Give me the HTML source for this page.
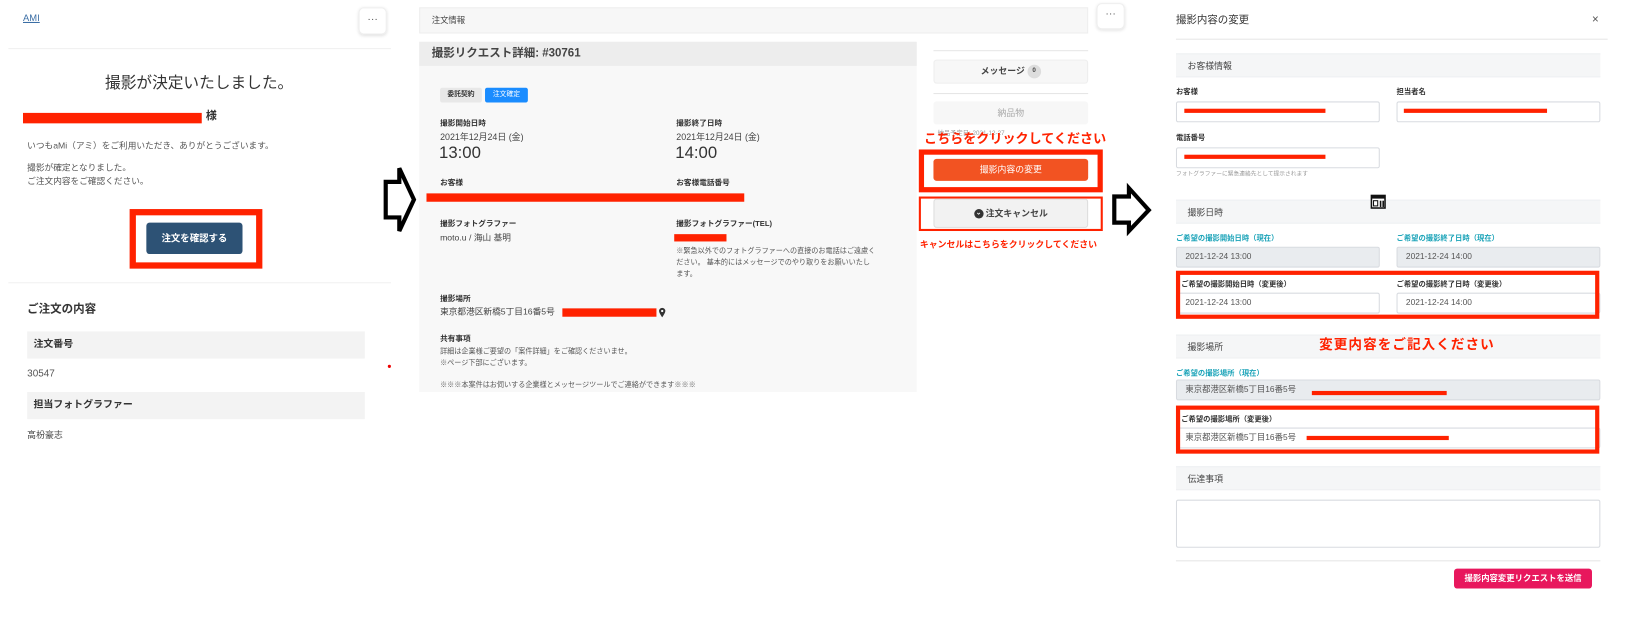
<!DOCTYPE html>
<html><head><meta charset="utf-8"><style>
*{margin:0;padding:0;box-sizing:border-box}
html,body{width:1639px;height:642px;overflow:hidden;background:#fff}
body{font-family:"Liberation Sans","Noto Sans CJK JP",sans-serif;color:#333}
#w{position:absolute;left:0;top:0;width:1568px;height:614px;transform:scale(1.0453);transform-origin:0 0}
.a{position:absolute;white-space:nowrap}
.t{position:absolute;white-space:nowrap;line-height:1}
.rb{position:absolute;background:#ff2200}
.bx{position:absolute;border:5px solid #ff2200}
.hr{position:absolute;height:1px;background:#e6e6e6}
.btn{position:absolute;border-radius:3px;text-align:center}
.sec{position:absolute;left:1125px;width:406px;height:23px;background:#f5f6f7;border-top:1px solid #eef0f2;border-bottom:1px solid #eef0f2;font-size:8.5px;line-height:22px;padding-left:11px;color:#444}
.in{position:absolute;height:20px;border:1px solid #d8dbe0;border-radius:2px;background:#fff;font-size:8px;line-height:18px;padding-left:8px;color:#555}
.dis{background:#e9ecef}
.lb{position:absolute;font-size:7px;font-weight:bold;line-height:1;white-space:nowrap;color:#333}
.teal{color:#1aa3b8}
</style></head><body><div id="w">

<!-- LEFT -->
<div class="t" style="left:22px;top:13px;font-size:9px;color:#3b6ea5;text-decoration:underline">AMI</div>
<div class="btn" style="left:343px;top:7px;width:27px;height:26px;border:1px solid #eee;box-shadow:0 1px 3px rgba(0,0,0,.12);font-size:10px;line-height:22px;color:#555;border-radius:5px">···</div>
<div class="hr" style="left:8px;top:46px;width:366px;background:#f0f0f0"></div>
<div class="t" style="left:0;width:381px;text-align:center;top:72px;font-size:15px;color:#333">撮影が決定いたしました。</div>
<div class="rb" style="left:22px;top:108px;width:171px;height:10px"></div>
<div class="t" style="left:197px;top:106px;font-size:10.5px;font-weight:bold">様</div>
<div class="t" style="left:26px;top:135px;font-size:8.3px;color:#555">いつもaMi（アミ）をご利用いただき、ありがとうございます。</div>
<div class="t" style="left:26px;top:156px;font-size:8.3px;color:#555">撮影が確定となりました。</div>
<div class="t" style="left:26px;top:169px;font-size:8.3px;color:#555">ご注文内容をご確認ください。</div>
<div class="bx" style="left:124px;top:200px;width:127px;height:57px;border-width:6px"></div>
<div class="btn" style="left:140px;top:213px;width:92px;height:30px;background:#2d5275;color:#fff;font-size:9px;font-weight:bold;line-height:30px">注文を確認する</div>
<div class="hr" style="left:8px;top:270px;width:366px;background:#f0f0f0"></div>
<div class="t" style="left:26px;top:291px;font-size:11px;font-weight:bold">ご注文の内容</div>
<div class="a" style="left:26px;top:317px;width:323px;height:26px;background:#f3f3f3;font-size:9.5px;font-weight:bold;line-height:26px;padding-left:6px">注文番号</div>
<div class="t" style="left:26px;top:353px;font-size:9.5px;color:#555">30547</div>
<div class="a" style="left:26px;top:375px;width:323px;height:26px;background:#f3f3f3;font-size:9.5px;font-weight:bold;line-height:26px;padding-left:6px">担当フォトグラファー</div>
<div class="t" style="left:26px;top:412px;font-size:8.5px;color:#444">高枌豪志</div>
<div class="a" style="left:371px;top:349px;width:3px;height:3px;border-radius:50%;background:#e00"></div>

<!-- ARROWS -->
<svg class="a" style="left:0;top:0" width="1568" height="614">
<polygon points="369,174 382,174 382,161 396,191 382,221 382,208 369,208" fill="#fff" stroke="#000" stroke-width="4" stroke-linejoin="miter"/>
<polygon points="1066,188 1080,188 1080,180 1099,201 1080,221 1080,213 1066,213" fill="#fff" stroke="#000" stroke-width="4"/>
</svg>

<!-- MIDDLE -->
<div class="a" style="left:401px;top:7px;width:640px;height:25px;background:#f7f7f7;border:1px solid #eee;font-size:8px;line-height:23px;padding-left:11px;color:#444">注文情報</div>
<div class="btn" style="left:1049px;top:3px;width:27px;height:25px;border:1px solid #eee;box-shadow:0 1px 3px rgba(0,0,0,.12);font-size:10px;line-height:20px;color:#555;border-radius:5px">···</div>
<div class="a" style="left:401px;top:40px;width:476px;height:335px;background:#f8f8f8"></div>
<div class="a" style="left:401px;top:40px;width:476px;height:23px;background:#ededed;font-size:11px;font-weight:bold;line-height:23px;padding-left:12px;color:#444">撮影リクエスト詳細: #30761</div>
<div class="a" style="left:421px;top:84px;width:40px;height:14px;background:#e8e8e8;border-radius:2px;font-size:6.5px;line-height:14px;text-align:center;font-weight:bold">委託契約</div>
<div class="a" style="left:464px;top:84px;width:41px;height:14px;background:#1a8cff;border-radius:2px;font-size:6.5px;line-height:14px;text-align:center;color:#fff">注文確定</div>
<div class="t" style="left:421px;top:114px;font-size:7.3px;font-weight:bold">撮影開始日時</div>
<div class="t" style="left:421px;top:127px;font-size:8.5px;color:#444">2021年12月24日 (金)</div>
<div class="t" style="left:420px;top:139px;font-size:16px;color:#333">13:00</div>
<div class="t" style="left:647px;top:114px;font-size:7.3px;font-weight:bold">撮影終了日時</div>
<div class="t" style="left:647px;top:127px;font-size:8.5px;color:#444">2021年12月24日 (金)</div>
<div class="t" style="left:646px;top:139px;font-size:16px;color:#333">14:00</div>
<div class="t" style="left:421px;top:171px;font-size:7.3px;font-weight:bold">お客様</div>
<div class="t" style="left:647px;top:171px;font-size:7.3px;font-weight:bold">お客様電話番号</div>
<div class="rb" style="left:408px;top:185px;width:304px;height:8px"></div>
<div class="t" style="left:421px;top:210px;font-size:7.3px;font-weight:bold">撮影フォトグラファー</div>
<div class="t" style="left:421px;top:223px;font-size:8.3px;color:#444">moto.u / 海山 基明</div>
<div class="t" style="left:647px;top:210px;font-size:7.3px;font-weight:bold">撮影フォトグラファー(TEL)</div>
<div class="rb" style="left:645px;top:224px;width:50px;height:7px"></div>
<div class="t" style="left:647px;top:238px;font-size:6.8px;color:#555">※緊急以外でのフォトグラファーへの直接のお電話はご遠慮く</div>
<div class="t" style="left:647px;top:249px;font-size:6.8px;color:#555">ださい。 基本的にはメッセージでのやり取りをお願いいたし</div>
<div class="t" style="left:647px;top:260px;font-size:6.8px;color:#555">ます。</div>
<div class="t" style="left:421px;top:282px;font-size:7.3px;font-weight:bold">撮影場所</div>
<div class="t" style="left:421px;top:294px;font-size:8.3px;color:#444">東京都港区新橋5丁目16番5号</div>
<div class="rb" style="left:538px;top:295px;width:90px;height:8px"></div>
<svg class="a" style="left:630px;top:294px" width="7" height="10" viewBox="0 0 7 10"><path d="M3.5 0.5a3 3 0 0 1 3 3c0 2-3 6-3 6s-3-4-3-6a3 3 0 0 1 3-3z" fill="#333"/><circle cx="3.5" cy="3.5" r="1.1" fill="#fff"/></svg>
<div class="t" style="left:421px;top:320px;font-size:7.3px;font-weight:bold">共有事項</div>
<div class="t" style="left:421px;top:334px;font-size:6.8px;color:#555">詳細は企業様ご要望の「案件詳細」をご確認くださいませ。</div>
<div class="t" style="left:421px;top:345px;font-size:6.8px;color:#555">※ページ下部にございます。</div>
<div class="t" style="left:421px;top:366px;font-size:6.8px;color:#555">※※※本案件はお伺いする企業様とメッセージツールでご連絡ができます※※※</div>

<div class="hr" style="left:893px;top:48px;width:148px"></div>
<div class="btn" style="left:893px;top:57px;width:148px;height:23px;background:#f7f7f7;border:1px solid #eee;font-size:8.5px;line-height:21px;font-weight:bold;color:#444">メッセージ <span style="display:inline-block;width:13px;height:13px;border-radius:50%;background:#ddd;font-size:6px;line-height:13px;vertical-align:middle">0</span></div>
<div class="hr" style="left:893px;top:89px;width:148px"></div>
<div class="btn" style="left:893px;top:97px;width:148px;height:22px;background:#f7f7f7;font-size:8.5px;line-height:22px;color:#aaa">納品物</div>
<div class="t" style="left:897px;top:125px;font-size:6px;color:#999">納品予定日: 2021-12-27</div>
<div class="t" style="left:884px;top:127px;font-size:12.5px;font-weight:bold;color:#ff2200">こちらをクリックしてください</div>
<div class="bx" style="left:879px;top:143px;width:176px;height:41px"></div>
<div class="btn" style="left:893px;top:152px;width:148px;height:21px;background:#f25322;color:#fff;font-size:8.5px;line-height:21px">撮影内容の変更</div>
<div class="bx" style="left:879px;top:188px;width:176px;height:33px;border-width:2px"></div>
<div class="btn" style="left:893px;top:190px;width:148px;height:28px;background:#f2f2f2;border:1px solid #ddd;font-size:8.5px;line-height:26px;font-weight:bold;color:#444"><span style="display:inline-block;width:9px;height:9px;border-radius:50%;background:#333;color:#fff;font-size:6px;line-height:9px;vertical-align:middle">⌄</span> 注文キャンセル</div>
<div class="t" style="left:880px;top:230px;font-size:8.5px;font-weight:bold;color:#ff2200">キャンセルはこちらをクリックしてください</div>

<!-- RIGHT -->
<div class="t" style="left:1125px;top:15px;font-size:10px;color:#333">撮影内容の変更</div>
<div class="t" style="left:1523px;top:14px;font-size:11px;color:#555">×</div>
<div class="hr" style="left:1125px;top:37px;width:413px"></div>
<div class="sec" style="top:51px">お客様情報</div>
<div class="lb" style="left:1125px;top:85px">お客様</div>
<div class="lb" style="left:1336px;top:85px">担当者名</div>
<div class="in" style="left:1125px;top:97px;width:195px"></div>
<div class="in" style="left:1336px;top:97px;width:195px"></div>
<div class="rb" style="left:1133px;top:104px;width:135px;height:4px"></div>
<div class="rb" style="left:1343px;top:104px;width:137px;height:4px"></div>
<div class="lb" style="left:1125px;top:129px">電話番号</div>
<div class="in" style="left:1125px;top:141px;width:195px"></div>
<div class="rb" style="left:1133px;top:148px;width:135px;height:4px"></div>
<div class="t" style="left:1125px;top:165px;font-size:5.5px;color:#999">フォトグラファーに緊急連絡先として提示されます</div>
<div class="sec" style="top:191px">撮影日時</div>
<svg class="a" style="left:1311px;top:186px" width="15" height="14" viewBox="0 0 15 14"><rect x="1" y="1" width="13" height="12" fill="#fff" stroke="#111" stroke-width="1.5"/><rect x="1" y="1" width="13" height="3" fill="#111"/><rect x="3" y="6" width="4" height="5" fill="none" stroke="#111"/><rect x="9" y="6" width="1.5" height="6" fill="#111"/><rect x="11.5" y="6" width="1.5" height="6" fill="#111"/></svg>
<div class="lb teal" style="left:1125px;top:225px">ご希望の撮影開始日時（現在）</div>
<div class="lb teal" style="left:1336px;top:225px">ご希望の撮影終了日時（現在）</div>
<div class="in dis" style="left:1125px;top:236px;width:195px">2021-12-24 13:00</div>
<div class="in dis" style="left:1336px;top:236px;width:195px">2021-12-24 14:00</div>
<div class="lb" style="left:1130px;top:269px">ご希望の撮影開始日時（変更後）</div>
<div class="lb" style="left:1336px;top:269px">ご希望の撮影終了日時（変更後）</div>
<div class="in" style="left:1125px;top:280px;width:195px">2021-12-24 13:00</div>
<div class="in" style="left:1336px;top:280px;width:195px">2021-12-24 14:00</div>
<div class="bx" style="left:1125px;top:259px;width:405px;height:46px;border-width:4px"></div>
<div class="sec" style="top:320px">撮影場所</div>
<div class="t" style="left:1262px;top:323px;font-size:13px;font-weight:bold;color:#ff2200;letter-spacing:1px">変更内容をご記入ください</div>
<div class="lb teal" style="left:1125px;top:354px">ご希望の撮影場所（現在）</div>
<div class="in dis" style="left:1125px;top:363px;width:406px">東京都港区新橋5丁目16番5号</div>
<div class="rb" style="left:1255px;top:374px;width:129px;height:4px"></div>
<div class="lb" style="left:1130px;top:398px">ご希望の撮影場所（変更後）</div>
<div class="in" style="left:1125px;top:409px;width:406px">東京都港区新橋5丁目16番5号</div>
<div class="rb" style="left:1250px;top:417px;width:136px;height:4px"></div>
<div class="bx" style="left:1125px;top:388px;width:405px;height:46px;border-width:4px"></div>
<div class="sec" style="top:446px">伝達事項</div>
<div class="in" style="left:1125px;top:478px;width:406px;height:46px"></div>
<div class="hr" style="left:1125px;top:536px;width:406px"></div>
<div class="btn" style="left:1391px;top:544px;width:132px;height:19px;background:#e8175d;color:#fff;font-size:8px;line-height:19px;font-weight:bold">撮影内容変更リクエストを送信</div>

</div></body></html>
